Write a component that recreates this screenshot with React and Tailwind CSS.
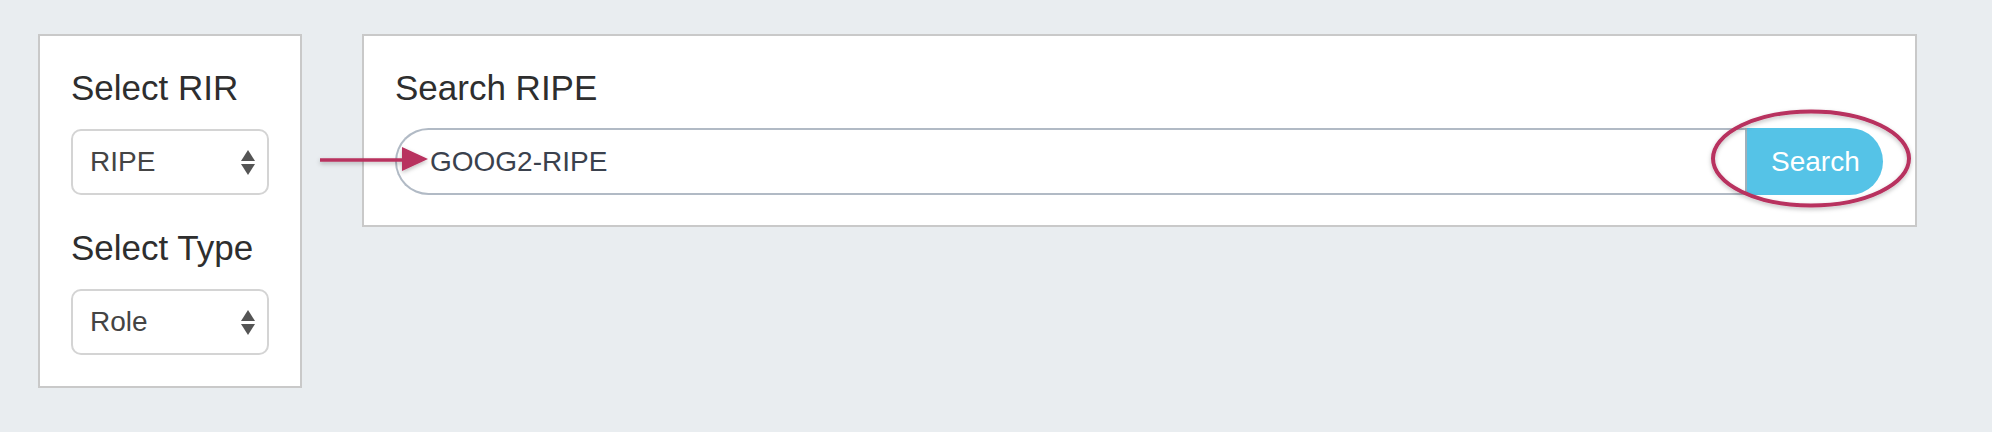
import React from "react";

function Select({ value }) {
  return (
    <div className="flex h-[66px] w-[198px] items-center justify-between rounded-[10px] border-2 border-[#d4d4d4] bg-white pl-[17px] pr-[12px]">
      <span className="text-[28px] text-[#444]">{value}</span>
      <svg width="14" height="25" viewBox="0 0 14 25">
        <polygon points="7,0 14,11 0,11" fill="#555" />
        <polygon points="0,14 14,14 7,25" fill="#555" />
      </svg>
    </div>
  );
}

export default function App() {
  return (
    <div
      className="relative h-[432px] w-[1992px] bg-[#e9edf0] font-['Liberation_Sans',Arial,sans-serif]"
    >
      <div className="flex items-start gap-[60px] pl-[38px] pt-[34px]">
        <div className="flex h-[354px] w-[264px] flex-col border-2 border-[#c9c9c9] bg-white pl-[31px] pt-[32px]">
          <div className="text-[35px] leading-[40px] text-[#2e2e2e]">Select RIR</div>
          <div className="mt-[21px]">
            <Select value="RIPE" />
          </div>
          <div className="mt-[33px] text-[35px] leading-[40px] text-[#2e2e2e]">Select Type</div>
          <div className="mt-[21px]">
            <Select value="Role" />
          </div>
        </div>
        <div className="flex h-[193px] w-[1555px] flex-col border-2 border-[#c9c9c9] bg-white pl-[31px] pr-[32px] pt-[32px]">
          <div className="text-[35px] leading-[40px] text-[#2e2e2e]">Search RIPE</div>
          <div className="mt-[20px] flex h-[67px]">
            <div className="flex flex-1 items-center rounded-l-full border-2 border-r-0 border-[#b1bac5] pl-[33px] text-[28px] text-[#3a414d]">
              GOOG2-RIPE
            </div>
            <div className="flex w-[138px] items-center rounded-r-full border-l-2 border-[#9fb0bb] bg-[#55c3e7] pl-[24px] text-[28px] text-white">
              Search
            </div>
          </div>
        </div>
      </div>
      <svg
        className="pointer-events-none absolute left-0 top-0"
        width="1992"
        height="432"
        viewBox="0 0 1992 432"
      >
        <defs>
          <filter id="sh" x="-10%" y="-10%" width="120%" height="130%">
            <feDropShadow dx="0" dy="2" stdDeviation="2" floodColor="#000" floodOpacity="0.25" />
          </filter>
        </defs>
        <g filter="url(#sh)">
          <line x1="320" y1="160" x2="406" y2="160" stroke="#b8305e" strokeWidth="3.5" />
          <polygon points="402,147 428,159 402,171" fill="#b8305e" />
          <ellipse cx="1811" cy="158.5" rx="98" ry="47" fill="none" stroke="#b8305e" strokeWidth="4" />
        </g>
      </svg>
    </div>
  );
}
